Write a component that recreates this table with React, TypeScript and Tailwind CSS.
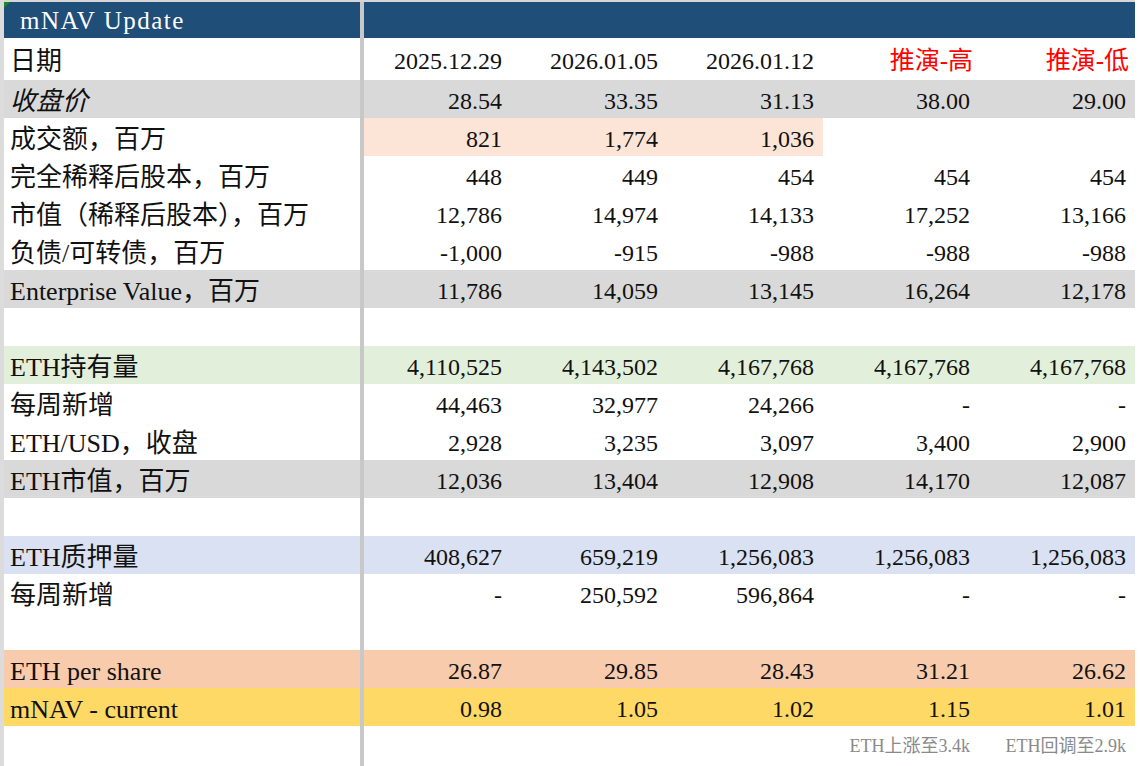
type Row = {
  label: string;
  values: string[];
  bg?: string;
  italic?: boolean;
  cellBg?: string;
  cellBgCount?: number;
  h?: string;
};

const rows: Row[] = [
  { label: '日期', values: ['2025.12.29', '2026.01.05', '2026.01.12', '推演-高', '推演-低'], h: 'h-[42px]' },
  { label: '收盘价', values: ['28.54', '33.35', '31.13', '38.00', '29.00'], bg: 'bg-[#d9d9d9]', italic: true },
  {
    label: '成交额，百万',
    values: ['821', '1,774', '1,036', '', ''],
    cellBg: 'bg-[#fce4d6]',
    cellBgCount: 3,
  },
  { label: '完全稀释后股本，百万', values: ['448', '449', '454', '454', '454'] },
  { label: '市值（稀释后股本），百万', values: ['12,786', '14,974', '14,133', '17,252', '13,166'] },
  { label: '负债/可转债，百万', values: ['-1,000', '-915', '-988', '-988', '-988'] },
  { label: 'Enterprise Value，百万', values: ['11,786', '14,059', '13,145', '16,264', '12,178'], bg: 'bg-[#d9d9d9]' },
  { label: '', values: ['', '', '', '', ''] },
  { label: 'ETH持有量', values: ['4,110,525', '4,143,502', '4,167,768', '4,167,768', '4,167,768'], bg: 'bg-[#e2efda]' },
  { label: '每周新增', values: ['44,463', '32,977', '24,266', '-', '-'] },
  { label: 'ETH/USD，收盘', values: ['2,928', '3,235', '3,097', '3,400', '2,900'] },
  { label: 'ETH市值，百万', values: ['12,036', '13,404', '12,908', '14,170', '12,087'], bg: 'bg-[#d9d9d9]' },
  { label: '', values: ['', '', '', '', ''] },
  { label: 'ETH质押量', values: ['408,627', '659,219', '1,256,083', '1,256,083', '1,256,083'], bg: 'bg-[#d9e1f2]' },
  { label: '每周新增', values: ['-', '250,592', '596,864', '-', '-'] },
  { label: '', values: ['', '', '', '', ''] },
  { label: 'ETH per share', values: ['26.87', '29.85', '28.43', '31.21', '26.62'], bg: 'bg-[#f8cbad]' },
  { label: 'mNAV - current', values: ['0.98', '1.05', '1.02', '1.15', '1.01'], bg: 'bg-[#ffd966]' },
];

const colW = ['w-[147px]', 'w-[156px]', 'w-[156px]', 'w-[156px]', 'w-[156px]'];

function TableRow({ row }: { row: Row }) {
  const isHead = !!row.h;
  return (
    <div className={`flex ${row.h ?? 'h-[38px]'}`}>
      <div
        className={`w-[356px] flex items-center pl-[6px] pt-[5px] text-[26px] whitespace-nowrap ${row.bg ?? ''} ${
          row.italic ? 'italic' : ''
        }`}
      >
        {row.label}
      </div>
      <div className="w-[4px] bg-[#c8c8c8]" />
      <div className={`flex ${row.bg ?? ''}`}>
        {row.values.map((v, i) => (
          <div
            key={i}
            className={`${colW[i]} flex items-center justify-end pt-[4px] whitespace-nowrap ${
              row.cellBg && i < (row.cellBgCount ?? 0) ? row.cellBg : ''
            } ${isHead && i > 2 ? 'text-[#ff0000] text-[25px] pr-[6px]' : 'text-[24px] pr-[9px]'}`}
          >
            {v}
          </div>
        ))}
      </div>
    </div>
  );
}

export default function App() {
  return (
    <div className="w-[1140px] h-[766px] bg-white flex overflow-hidden text-[#111] font-['Liberation_Serif','Noto_Sans_CJK_SC',serif]">
      {/* row header strip */}
      <div className="w-[4px] bg-[#dcdcdc]" />
      <div className="flex flex-col">
        <div className="h-[2px] bg-[#d6d6d6]" />
        {/* title row */}
        <div className="flex h-[36px]">
          <div className="w-[356px] bg-[#1f4e79] text-white text-[25px] flex items-center pl-[16px] pt-[1px] tracking-[1.5px] relative">
            <span className="absolute left-0 top-0 w-0 h-0 border-t-[6px] border-r-[6px] border-t-[#1a8a1a] border-r-transparent" />
            mNAV Update
          </div>
          <div className="w-[4px] bg-[#c8c8c8]" />
          <div className="w-[771px] bg-[#1f4e79]" />
        </div>
        {rows.map((r, i) => (
          <TableRow key={i} row={r} />
        ))}
        {/* notes */}
        <div className="flex h-[40px]">
          <div className="w-[356px]" />
          <div className="w-[4px] bg-[#c8c8c8]" />
          <div className="flex">
            <div className="w-[147px]" />
            <div className="w-[156px]" />
            <div className="w-[156px]" />
            <div className="w-[156px] flex items-start justify-end pr-[9px] pt-[7px] text-[18px] text-[#8a8a8a] whitespace-nowrap">
              ETH上涨至3.4k
            </div>
            <div className="w-[156px] flex items-start justify-end pr-[9px] pt-[7px] text-[18px] text-[#8a8a8a] whitespace-nowrap">
              ETH回调至2.9k
            </div>
          </div>
        </div>
      </div>
    </div>
  );
}
